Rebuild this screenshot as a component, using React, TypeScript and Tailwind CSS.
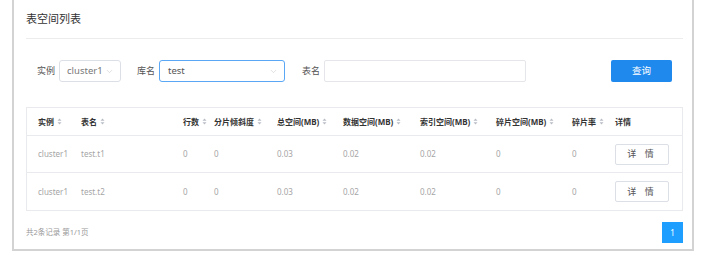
import { ChevronDown } from "lucide-react";

type Row = {
  cluster: string;
  table: string;
  rows: string;
  skew: string;
  total: string;
  data: string;
  index: string;
  frag: string;
  fragRate: string;
};

const rows: Row[] = [
  { cluster: "cluster1", table: "test.t1", rows: "0", skew: "0", total: "0.03", data: "0.02", index: "0.02", frag: "0", fragRate: "0" },
  { cluster: "cluster1", table: "test.t2", rows: "0", skew: "0", total: "0.03", data: "0.02", index: "0.02", frag: "0", fragRate: "0" },
];

const headers = ["实例", "表名", "行数", "分片倾斜度", "总空间(MB)", "数据空间(MB)", "索引空间(MB)", "碎片空间(MB)", "碎片率"];

const cols = "grid grid-cols-[54px_102px_31px_63px_66px_77px_76px_76px_43px_1fr]";

function SortIcon() {
  return (
    <svg width="5" height="7" viewBox="0 0 5 7" className="ml-[3px] inline-block">
      <path d="M2.5 0.5 L4.5 2.8 H0.5 Z" fill="#b8bcc4" />
      <path d="M2.5 6.5 L4.5 4.2 H0.5 Z" fill="#b8bcc4" />
    </svg>
  );
}

export default function App() {
  return (
    <div className="h-[255px] w-[705px] bg-white font-['Noto_Sans','Noto_Sans_CJK_SC',sans-serif]">
      <div className="ml-[12px] flex h-[251px] w-[682px] flex-col border-x-2 border-b-2 border-[#d3d3d3] pl-[12px] pr-[9px]">
        {/* Title */}
        <div className="flex h-[39px] items-center border-b border-[#ececec] text-[11px] text-[#333]">
          表空间列表
        </div>

        {/* Filters */}
        <div className="mt-[21px] flex h-[22px] items-center pl-[11px] pr-[11px] text-[9px] text-[#555]">
          <span className="mr-[4px]">实例</span>
          <div className="flex h-[22px] w-[62px] items-center justify-between rounded-[3px] border border-[#dcdfe6] pl-[7px] pr-[6px] text-[9.5px] text-[#777]">
            <span>cluster1</span>
            <ChevronDown size={9} strokeWidth={1.2} color="#bbb" />
          </div>
          <span className="ml-[16px] mr-[4px]">库名</span>
          <div className="flex h-[22px] w-[126px] items-center justify-between rounded-[3px] border border-[#5aa7f5] pl-[8px] pr-[6px] text-[9.5px] text-[#555]">
            <span>test</span>
            <ChevronDown size={9} strokeWidth={1.2} color="#bbb" />
          </div>
          <span className="ml-[17px] mr-[4px]">表名</span>
          <div className="h-[22px] w-[202px] rounded-[2px] border border-[#e4e6ea]" />
          <button className="ml-auto h-[22px] w-[61px] rounded-[2px] bg-[#1f89ee] text-[9.5px] text-white">
            查询
          </button>
        </div>

        {/* Table */}
        <div className="mt-[25px] border border-[#e8eaee] text-[8px]">
          <div className={`${cols} h-[28px] items-center border-b border-[#e8eaee] font-bold text-[#333]`}>
            {headers.map((h, i) => (
              <div key={h} className={`flex items-center ${i === 0 ? "pl-[11px]" : ""}`}>
                {h}
                <SortIcon />
              </div>
            ))}
            <div>详情</div>
          </div>
          {rows.map((r, idx) => (
            <div
              key={r.table}
              className={`${cols} h-[37px] items-center text-[#a5a5a5] ${idx === 0 ? "border-b border-[#e8eaee]" : ""}`}
            >
              <div className="pl-[11px]">{r.cluster}</div>
              <div>{r.table}</div>
              <div>{r.rows}</div>
              <div>{r.skew}</div>
              <div>{r.total}</div>
              <div>{r.data}</div>
              <div>{r.index}</div>
              <div>{r.frag}</div>
              <div>{r.fragRate}</div>
              <div>
                <button className="h-[21px] w-[54px] rounded-[2px] border border-[#dcdfe6] bg-white text-[9px] tracking-[3px] text-[#555]">
                  详 情
                </button>
              </div>
            </div>
          ))}
        </div>

        {/* Footer */}
        <div className="mt-[11px] flex items-center justify-between">
          <span className="text-[7.5px] text-[#999]">共2条记录 第1/1页</span>
          <span className="flex h-[21px] w-[21px] items-center justify-center bg-[#1e9fff] text-[8px] text-white">
            1
          </span>
        </div>
      </div>
    </div>
  );
}
